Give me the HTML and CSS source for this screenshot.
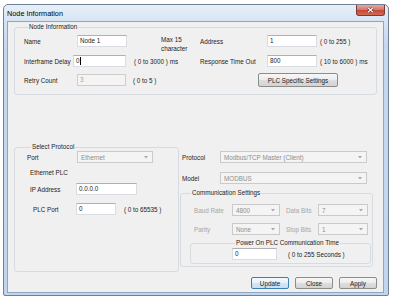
FILE: index.html
```html
<!DOCTYPE html>
<html>
<head>
<meta charset="utf-8">
<link rel="stylesheet" href="styles.css">
</head>
<body>
<div class="window">
  <div class="titlebar">
    <span class="title">Node Information</span>
    <div class="close-btn">
      <svg width="7" height="6" viewBox="0 0 7 6"><path d="M1 0.8L6 5.2M6 0.8L1 5.2" stroke="#5a1a14" stroke-width="2.2"/><path d="M1 0.8L6 5.2M6 0.8L1 5.2" stroke="#fff" stroke-width="1.2"/></svg>
    </div>
  </div>
  <div class="client">
    <fieldset class="group group-node">
      <legend>Node Information</legend>
      <div class="row">
        <div class="half-left">
          <span class="lbl lbl-name">Name</span>
          <div class="tb tb-50">Node 1</div>
          <span class="note note-max">Max 15<br>character</span>
        </div>
        <div class="half-right">
          <span class="lbl lbl-right">Address</span>
          <div class="tb tb-50">1</div>
          <span class="note note-r">( 0 to 255 )</span>
        </div>
      </div>
      <div class="row row-2">
        <div class="half-left">
          <span class="lbl lbl-ifd">Interframe Delay</span>
          <div class="tb tb-53">0<span class="caret"></span></div>
          <span class="note note-ifd">( 0 to 3000 ) ms</span>
        </div>
        <div class="half-right">
          <span class="lbl lbl-right">Response Time Out</span>
          <div class="tb tb-50">800</div>
          <span class="note note-r">( 10 to 6000 ) ms</span>
        </div>
      </div>
      <div class="row row-3">
        <div class="half-left">
          <span class="lbl lbl-name">Retry Count</span>
          <div class="tb tb-49 tb-disabled">3</div>
          <span class="note note-retry">( 0 to 5 )</span>
        </div>
        <div class="half-right">
          <div class="btn btn-plc">PLC Specific Settings</div>
        </div>
      </div>
    </fieldset>

    <div class="lower">
      <fieldset class="group group-protocol">
        <legend>Select Protocol</legend>
        <div class="row row-port">
          <span class="lbl lbl-port">Port</span>
          <div class="combo combo-port"><span>Ethernet</span><svg class="arrow" width="4" height="3" viewBox="0 0 4 3"><path d="M0 0H4L2 2.5Z" fill="#a8a8a8"/></svg></div>
        </div>
        <div class="sub-label">Ethernet PLC</div>
        <div class="row row-ip">
          <span class="lbl lbl-ip">IP Address</span>
          <div class="tb tb-61">0.0.0.0</div>
        </div>
        <div class="row row-plcport">
          <span class="lbl lbl-plcport">PLC Port</span>
          <div class="tb tb-40">0</div>
          <span class="note note-port">( 0 to 65535 )</span>
        </div>
      </fieldset>

      <div class="right-col">
        <div class="row row-protocol">
          <span class="lbl lbl-proto">Protocol</span>
          <div class="combo combo-wide"><span>Modbus/TCP Master (Client)</span><svg class="arrow" width="4" height="3" viewBox="0 0 4 3"><path d="M0 0H4L2 2.5Z" fill="#a8a8a8"/></svg></div>
        </div>
        <div class="row row-model">
          <span class="lbl lbl-proto">Model</span>
          <div class="combo combo-wide"><span>MODBUS</span><svg class="arrow" width="4" height="3" viewBox="0 0 4 3"><path d="M0 0H4L2 2.5Z" fill="#a8a8a8"/></svg></div>
        </div>
        <fieldset class="group group-comm">
          <legend>Communication Settings</legend>
          <div class="row row-baud">
            <span class="lbl lbl-dis lbl-baud">Baud Rate</span>
            <div class="combo combo-48"><span>4800</span><svg class="arrow" width="4" height="3" viewBox="0 0 4 3"><path d="M0 0H4L2 2.5Z" fill="#a8a8a8"/></svg></div>
            <span class="lbl lbl-dis lbl-bits">Data Bits</span>
            <div class="combo combo-50"><span>7</span><svg class="arrow" width="4" height="3" viewBox="0 0 4 3"><path d="M0 0H4L2 2.5Z" fill="#a8a8a8"/></svg></div>
          </div>
          <div class="row row-parity">
            <span class="lbl lbl-dis lbl-baud">Parity</span>
            <div class="combo combo-48"><span>None</span><svg class="arrow" width="4" height="3" viewBox="0 0 4 3"><path d="M0 0H4L2 2.5Z" fill="#a8a8a8"/></svg></div>
            <span class="lbl lbl-dis lbl-bits">Stop Bits</span>
            <div class="combo combo-50"><span>1</span><svg class="arrow" width="4" height="3" viewBox="0 0 4 3"><path d="M0 0H4L2 2.5Z" fill="#a8a8a8"/></svg></div>
          </div>
          <fieldset class="group group-power">
            <legend>Power On PLC Communication Time</legend>
            <div class="row">
              <div class="tb tb-45">0</div>
              <span class="note note-power">( 0 to 255 Seconds )</span>
            </div>
          </fieldset>
        </fieldset>
      </div>
    </div>

    <div class="buttons">
      <div class="btn btn-dlg btn-focus">Update</div>
      <div class="btn btn-dlg">Close</div>
      <div class="btn btn-dlg">Apply</div>
    </div>
  </div>
</div>
</body>
</html>
```

FILE: styles.css
```css
* { box-sizing: border-box; }

body {
  margin: 0;
  background: #ffffff;
  font-family: "Liberation Sans", Arial, sans-serif;
  font-size: 6.3px;
  color: #1c1c1c;
}

.window {
  margin: 4px 0 0 3px;
  width: 386px;
  height: 292px;
  border: 1px solid #6f8196;
  border-radius: 5px 5px 2px 2px;
  background: linear-gradient(#e8f0f9, #d6e4f4 16px, #c6d8ee 40px, #c1d5ec);
  display: flex;
  flex-direction: column;
}

.titlebar {
  height: 16px;
  flex: none;
  display: flex;
  align-items: center;
  padding-left: 3px;
}

.title {
  font-size: 7.3px;
  color: #000;
}

.close-btn {
  margin-left: auto;
  margin-right: 3px;
  align-self: flex-start;
  width: 29px;
  height: 11px;
  border: 1px solid #7a3b33;
  border-top: none;
  border-radius: 0 0 3px 3px;
  background: linear-gradient(#e8a89e, #d8786c 45%, #c8483a 55%, #d36a56);
  display: flex;
  align-items: center;
  justify-content: center;
}

.client {
  margin: 0 4px 0 3px;
  height: 272px;
  flex: none;
  border: 1px solid #8fa5c0;
  background: #f0f0f0;
  padding: 0 5px 0 6px;
  display: flex;
  flex-direction: column;
}

.group {
  margin: 0;
  padding: 0;
  min-width: 0;
  border: 1px solid #d5dbe0;
  border-radius: 3px;
}

.group legend {
  padding: 0 1px;
  margin-left: 4px;
  line-height: 8px;
  font-size: 6.3px;
}

.group-node {
  margin-top: 1px;
  width: 363px;
  padding: 4px 0 8px 9px;
}

.row {
  display: flex;
  align-items: center;
  height: 12px;
  flex: none;
}

.row-2 { margin-top: 8px; }
.row-3 { margin-top: 7px; }

.half-left {
  width: 176px;
  height: 12px;
  display: flex;
  align-items: center;
  flex: none;
}

.half-right {
  flex: 1;
  height: 12px;
  display: flex;
  align-items: center;
}

.lbl { flex: none; white-space: nowrap; }
.lbl-name { width: 53px; }
.lbl-ifd { width: 49px; }
.lbl-right { width: 67px; }
.lbl-port { width: 50px; }
.lbl-ip { width: 46px; margin-left: 3px; }
.lbl-plcport { width: 43px; margin-left: 6px; }
.lbl-proto { width: 38px; }
.lbl-dis { color: #a6a6a6; }
.lbl-baud { width: 38px; }
.lbl-bits { width: 32px; margin-left: 6px; }

.tb {
  flex: none;
  height: 12px;
  background: #ffffff;
  border: 1px solid #d9dde3;
  border-top-color: #adb0b7;
  padding-left: 2px;
  line-height: 10px;
  display: flex;
  align-items: center;
  white-space: nowrap;
}

.tb-disabled {
  background: #f4f4f4;
  border-color: #cccccc;
  color: #a3a3a3;
}

.tb-50 { width: 50px; }
.tb-53 { width: 53px; }
.tb-49 { width: 49px; }
.tb-61 { width: 61px; }
.tb-40 { width: 40px; }
.tb-45 { width: 45px; }

.caret {
  width: 1px;
  height: 8px;
  background: #000;
  margin-left: 0.5px;
}

.note { flex: none; white-space: nowrap; }
.note-max {
  margin-left: 34px;
  line-height: 9px;
  align-self: flex-start;
}
.note-r { margin-left: 3px; }
.note-ifd { margin-left: 8px; }
.note-retry { margin-left: 7px; }
.note-port { margin-left: 8px; }
.note-power { margin-left: 11px; }

.btn {
  flex: none;
  border: 1px solid #8c8c8c;
  border-radius: 2px;
  background: linear-gradient(#f7f7f7, #ececec 48%, #dedede 52%, #d3d3d3);
  display: flex;
  align-items: center;
  justify-content: center;
  white-space: nowrap;
  color: #1a1a1a;
}

.btn-plc {
  margin-left: 58px;
  width: 80px;
  height: 14px;
}

.lower {
  display: flex;
  margin-top: 48px;
  flex: none;
}

.group-protocol {
  width: 165px;
  flex: none;
  padding: 0 0 56px 12px;
}

.sub-label {
  margin: 6px 0 0 3px;
  line-height: 8px;
}

.row-ip { margin-top: 6px; }
.row-plcport { margin-top: 8px; }

.combo {
  flex: none;
  height: 12px;
  border: 1px solid #cacaca;
  background: #f4f4f4;
  color: #8e8e8e;
  display: flex;
  align-items: center;
  justify-content: space-between;
  padding: 0 4px 0 3px;
  white-space: nowrap;
}

.combo-port { width: 76px; }
.combo-wide { width: 147px; }
.combo-48 { width: 48px; }
.combo-50 { width: 50px; }

.arrow { flex: none; }

.right-col {
  margin-left: 1px;
  width: 193px;
  flex: none;
  padding-top: 8px;
  display: flex;
  flex-direction: column;
}

.row-protocol, .row-model { padding-left: 2px; }
.row-model { margin-top: 9px; }

.group-comm {
  margin-top: 5px;
  width: 193px;
  padding: 7px 2px 2px 9px;
}

.group-comm > legend { margin-left: 1px; }

.row-baud, .row-parity { padding-left: 4px; }
.row-parity { margin-top: 7px; }

.group-power {
  margin-top: 4px;
  width: 181px;
  padding: 1px 0 3px 41px;
}

.group-power > legend { margin-left: 3px; }

.buttons {
  display: flex;
  justify-content: flex-end;
  gap: 6px;
  margin-top: 5px;
  padding-right: 1px;
}

.btn-dlg {
  width: 38px;
  height: 12px;
}

.btn-focus {
  border-color: #3c7fb1;
  background: linear-gradient(#f4f9fd, #e4eff9 48%, #d4e6f5 52%, #c9def0);
}
```
